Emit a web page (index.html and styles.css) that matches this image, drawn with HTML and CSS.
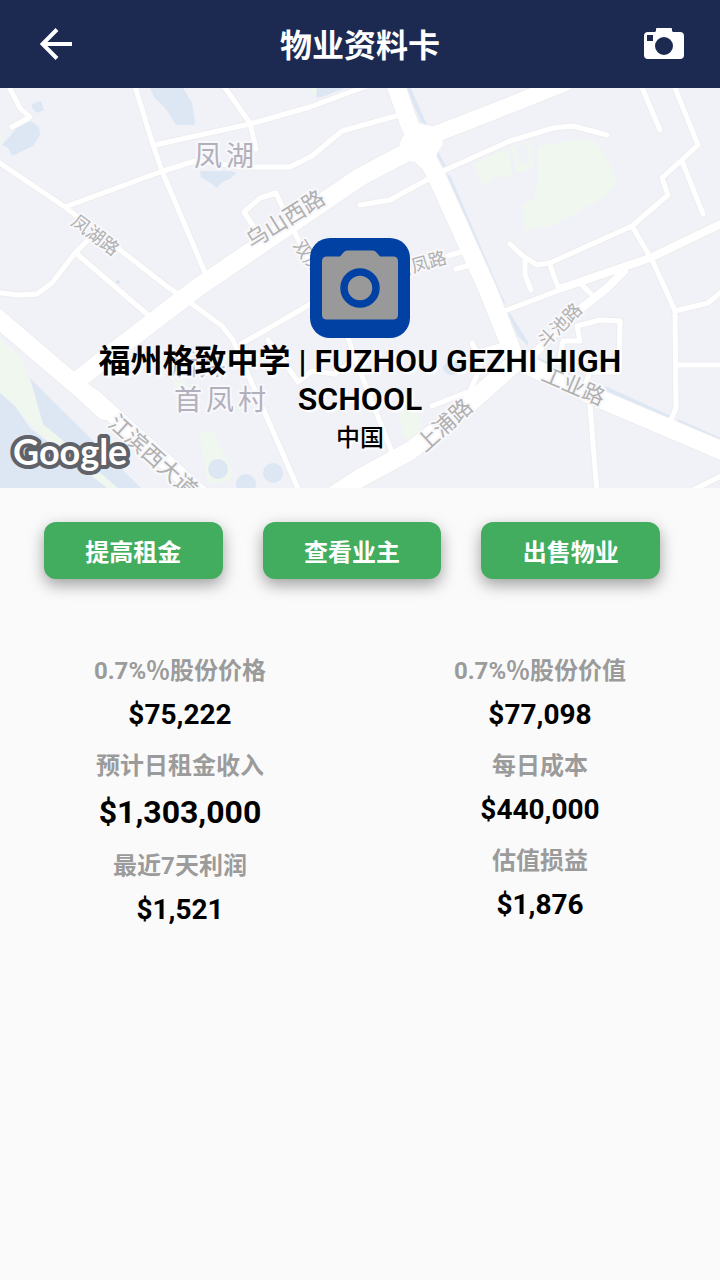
FILE: index.html
```html
<!DOCTYPE html>
<html lang="zh-CN">
<head>
<meta charset="utf-8">
<meta name="viewport" content="width=device-width, initial-scale=1">
<title>物业资料卡</title>
<link rel="stylesheet" href="styles.css">
</head>
<body>
<header class="app-bar">
  <button class="icon-button" type="button" aria-label="返回">
    <svg width="32" height="32" viewBox="0 0 32 32" fill="none" stroke="currentColor" stroke-width="4" aria-hidden="true"><path d="M32 16H3M17 1.500L2.500 16L17 30.500"/></svg>
  </button>
  <h1 class="app-title">物业资料卡</h1>
  <button class="icon-button" type="button" aria-label="拍照">
    <svg width="40" height="32" viewBox="0 0 40 32" aria-hidden="true"><path fill="currentColor" fill-rule="evenodd" d="M13 0H27Q28 0 28 1V3L29 4H36Q40 4 40 8V27Q40 31 36 31H4Q0 31 0 27V8Q0 4 4 4H11L12 3V1Q12 0 13 0ZM3 7V13H9V7ZM20 9A9 9 0 1 0 20 27A9 9 0 1 0 20 9Z"/></svg>
  </button>
</header>

<main>
  <section class="hero">
    <svg class="map" viewBox="0 0 720 400" preserveAspectRatio="xMidYMid slice" aria-hidden="true">
      <defs>
        <path id="minor" d="M7 -5L20 20L30 29L12 39M134 -5L153 57L162 83L206 187M155 57L250 36L310 19L372 -4M223 -3L250 35L256 61M65 119L160 84L195 73L243 79H290L312 68L342 43L403 26M-5 72L65 119L165 197L188 213L222 238L233 252L243 275L300 405M88 152L75 165L52 195L37 206L18 207L-5 204M77 166L148 227M258 145L244 124L260 110L276 105L290 135L315 185M241 256L314 214M268 252L285 275L298 294L312 283L335 286L348 276M348 250L360 283L393 367M360 117L390 112L443 83L510 53L553 40L573 38L607 47M641 -3L660 42M673 -5L698 57L662 90L668 107L632 138L550 175L537 177L523 168L510 156M682 73L703 126M632 138L652 172L665 200L675 223L676 320L671 332M675 223L708 215L722 203M676 277H725M525 173V187L531 202M550 177L559 202M447 168L465 163M456 181L470 177M507 222L573 197M580 195L592 207M577 238L600 232L620 233L619 284L590 284L585 297M577 238L580 253H563L560 270M590 317L597 405M432 318L470 303L480 280M472 255L477 264L505 257M693 402L725 386"/>
        <path id="medium" d="M562 200L600 187L650 170L725 134M500 292L537 263L573 227L607 200L624 183"/>
        <path id="major" d="M197 200L360 89L415 60M197 200L103 272L78 292M-5 228L84 304L105 323M395 -5L410 38L436 87L487 200L515 270L545 286L600 311L725 364M320 416L360 390L410 363L455 328L515 275"/>
        <path id="avenue" d="M92 308L210 414M415 54L490 25L565 -5"/>
      </defs>
      <g class="park">
        <path d="M0 44L3 52L0 56ZM308 -2L317 10L319 3L315 -2ZM538 58L580 51Q596 51 602 62L612 80L617 94L604 109L575 126L553 137L524 143V124L522 116L524 114L533 113Q538 100 538 76ZM473 75L508 61L512 84V87L505 89H497L491 93L486 96L480 94Z"/>
        <path fill-rule="evenodd" d="M511 58L530 53L534 79L517 85ZM516 58L519 76L530 74L526 56Z"/>
        <path d="M0 250L22 271L34 304L43 336L118 400H107L43 348L0 305ZM199 346L213 342L232 384L230 393L208 395ZM398 320L418 325L425 348L424 354L412 358L402 347ZM174 292H184L188 300L176 304Z"/>
      </g>
      <g class="water">
        <path d="M2 57L17 40L31 33L39 39L40 47L33 58L12 68L8 60ZM32 16L41 13L44 22L37 25L32 20ZM149 -2H182L192 15L195 34L194 37H176L166 21L154 9ZM200 83H231L237 85L230 91L222 94L217 100L209 94L201 89ZM317 -2H350L325 8L316 10Z"/>
        <path d="M405 -2H410L427 37L421 34ZM437 62L446 78V87L438 78ZM446 87H450L502 208L506 216L500 211ZM510 225L528 254V258L518 248L508 226ZM538 269L570 286V289L538 273ZM605 298L669 327V331L603 302ZM678 331L725 352V356L677 334Z"/>
        <path d="M0 305L15 318L30 340L107 400H0ZM30 290L65 325L141 400H118L60 350L43 336L34 304Z"/>
        <circle cx="218" cy="381" r="10"/><circle cx="246" cy="396" r="10"/><circle cx="273" cy="385" r="10"/><circle cx="118" cy="194" r="2"/>
        <path d="M443 278Q450 271 462 275L459 285Q449 290 443 282Z"/>
      </g>
      <g class="road-edge">
        <use href="#minor" class="minor"/>
        <use href="#medium" class="medium"/>
        <use href="#major" class="major"/>
        <use href="#avenue" class="avenue"/>
      </g>
      <g class="road-fill">
        <use href="#minor" class="minor"/>
        <use href="#medium" class="medium"/>
        <use href="#major" class="major"/>
        <use href="#avenue" class="avenue"/>
        <path class="junction" d="M405 32L427 38L442 40V57L436 66L437 84L426 84L415 73L404 72L400 56L405 46Z"/>
      </g>
      <g class="road-name">
        <text class="small" transform="translate(70 136) rotate(37)">凤湖路</text>
        <text transform="translate(252 161) rotate(-32)">乌山西路</text>
        <text class="small" transform="translate(293 157) rotate(58)">双凤路</text>
        <text class="small" transform="translate(396 190) rotate(-16)">首凤路</text>
        <text class="small" transform="translate(545 261) rotate(-45)">斗池路</text>
        <text transform="translate(540 292) rotate(23)">工业路</text>
        <text transform="translate(425 365) rotate(-42)">上浦路</text>
        <text transform="translate(107 337) rotate(42)">江滨西大道</text>
      </g>
      <g class="place-name">
        <text class="hamlet" x="170" y="287">后井</text>
        <text x="194" y="78">凤</text><text x="226" y="78">湖</text>
        <text x="174" y="322">首</text><text x="206" y="322">凤</text><text x="238" y="322">村</text>
      </g>
      <text class="map-brand" x="13" y="377">Google</text>
    </svg>
    <div class="property">
      <button class="photo-button" type="button" aria-label="添加物业照片">
        <svg width="100" height="100" viewBox="0 0 100 100" aria-hidden="true"><path fill="#999999" d="M37 12.500H63Q65 12.500 66 14L70 18.500H84Q88 19 88 23V77Q88 81 84 81.500H16Q12 81 12 77V23Q12 19 16 18.500H30L34 14Q35 12.500 37 12.500Z"/><circle cx="50" cy="50" r="16" fill="none" stroke="#0041a3" stroke-width="7.500"/></svg>
      </button>
      <h2 class="property-name">福州格致中学 | FUZHOU GEZHI HIGH SCHOOL</h2>
      <p class="country">中国</p>
    </div>
  </section>

  <div class="actions">
    <button class="action" type="button">提高租金</button>
    <button class="action" type="button">查看业主</button>
    <button class="action" type="button">出售物业</button>
  </div>

  <div class="stats">
    <dl class="stat-column">
      <div class="stat"><dt>0.7%％股份价格</dt><dd>$75,222</dd></div>
      <div class="stat"><dt>预计日租金收入</dt><dd class="large">$1,303,000</dd></div>
      <div class="stat"><dt>最近7天利润</dt><dd>$1,521</dd></div>
    </dl>
    <dl class="stat-column">
      <div class="stat"><dt>0.7%％股份价值</dt><dd>$77,098</dd></div>
      <div class="stat"><dt>每日成本</dt><dd>$440,000</dd></div>
      <div class="stat"><dt>估值损益</dt><dd>$1,876</dd></div>
    </dl>
  </div>
</main>
</body>
</html>
```

FILE: styles.css
```css
* { box-sizing: border-box; }

body {
  margin: 0;
  min-height: 100vh;
  background: #fafafa;
  color: #000;
  font-family: Roboto, "Noto Sans CJK SC", sans-serif;
}

h1, h2, p, dl, dd { margin: 0; }

button {
  padding: 0;
  border: 0;
  font: inherit;
  cursor: pointer;
}

.app-bar {
  display: flex;
  align-items: center;
  justify-content: space-between;
  height: 88px;
  padding: 0 28px;
  background: #1c2a52;
  color: #fff;
}

.icon-button {
  display: grid;
  place-items: center;
  width: 56px;
  height: 56px;
  background: none;
  color: inherit;
}

.app-title {
  padding-top: 4px;
  font-size: 32px;
  line-height: 40px;
  font-weight: 700;
}

.hero {
  position: relative;
  min-height: 400px;
  padding: 150px 40px 32px;
  overflow: hidden;
  background: #f1f2f7;
}

.map {
  position: absolute;
  inset: 0;
  width: 100%;
  height: 100%;
}

.water { fill: #dce7f3; }
.park { fill: #eff7ef; }

.road-edge, .road-fill {
  fill: none;
  stroke-linecap: round;
  stroke-linejoin: round;
}

.road-edge { stroke: #ededf0; }
.road-edge .minor { stroke-width: 7px; }
.road-edge .medium { stroke-width: 10px; }
.road-edge .major { stroke-width: 20px; }
.road-edge .avenue { stroke-width: 18px; }

.road-fill { stroke: #fff; }
.road-fill .minor { stroke-width: 5px; }
.road-fill .medium { stroke-width: 8px; }
.road-fill .major { stroke-width: 18px; }
.road-fill .avenue { stroke-width: 16px; }
.road-fill .junction { fill: #fff; }

.road-name, .place-name {
  font-family: "Noto Sans CJK SC", sans-serif;
  paint-order: stroke;
  stroke: #f8f8fb;
  stroke-width: 4px;
  stroke-linejoin: round;
}

.road-name { fill: #b0b0b0; font-size: 22px; }
.road-name .small { font-size: 18px; }
.place-name { fill: #b3b0bd; font-size: 28px; }

.map-brand {
  font-family: Lato, sans-serif;
  font-size: 36px;
  font-weight: 700;
  fill: #fff;
  stroke: #5f6268;
  stroke-width: 8px;
  stroke-linejoin: round;
  paint-order: stroke;
}

.property {
  position: relative;
  display: flex;
  flex-direction: column;
  align-items: center;
  text-align: center;
  text-shadow: 2px 2px 2px #fff;
}

.photo-button {
  display: block;
  width: 100px;
  height: 100px;
  border-radius: 20px;
  overflow: hidden;
  background: #0041a3;
}

.photo-button svg { display: block; }

.property-name {
  margin-top: 4px;
  font-size: 32px;
  line-height: 38px;
  font-weight: 600;
}

.country {
  margin-top: 6px;
  font-size: 24px;
  line-height: 28px;
  font-weight: 500;
}

.actions {
  display: grid;
  grid-template-columns: repeat(3, 1fr);
  gap: 40px;
  padding: 34px 60px 34px 44px;
}

.action {
  height: 57px;
  border-radius: 12px;
  background: #43ad5f;
  color: #fff;
  font-size: 24px;
  font-weight: 700;
  box-shadow: 0 6px 16px rgba(0, 0, 0, 0.36);
}

.stats {
  display: grid;
  grid-template-columns: 1fr 1fr;
  align-items: start;
  padding-top: 40px;
  text-align: center;
}

.stat-column {
  display: grid;
  gap: 17px;
}

.stat dt {
  color: #9b9b9b;
  font-size: 24px;
  line-height: 36px;
  font-weight: 700;
}

.stat dd {
  margin-top: 9px;
  font-size: 28px;
  line-height: 33px;
  font-weight: 700;
}

.stat .large {
  font-size: 32px;
  line-height: 38px;
}
```
